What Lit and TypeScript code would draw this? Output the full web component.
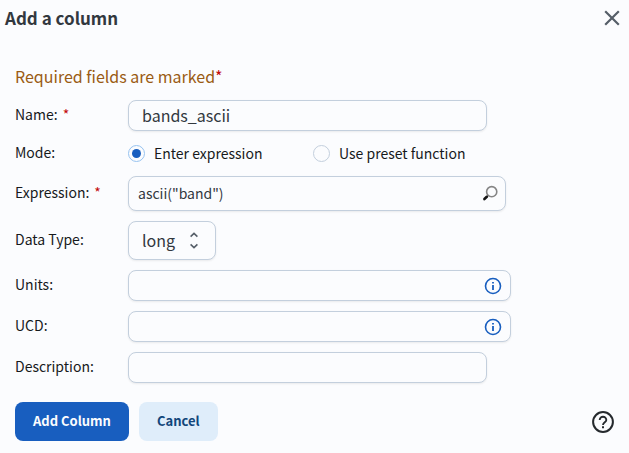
import { LitElement, html, css } from "lit";
import { customElement, property, state } from "lit/decorators.js";

const infoIcon = html`<svg viewBox="0 0 18 18" width="18" height="18" aria-hidden="true">
  <circle cx="9" cy="9" r="7.5" fill="none" stroke="currentColor" stroke-width="1.6" />
  <path d="M8.1 4.9h1.8v1.7H8.1zM8.1 8h1.8v5H8.1z" fill="currentColor" />
</svg>`;

@customElement("form-row")
class FormRow extends LitElement {
  @property() label = "";
  @property({ type: Boolean }) required = false;

  static styles = css`
    :host {
      display: grid;
      grid-template-columns: 103px minmax(0, 1fr);
      column-gap: 10px;
      align-items: center;
    }
    .label {
      display: flex;
      gap: 5px;
      line-height: 20px;
      padding-bottom: 4px;
      white-space: nowrap;
    }
    .star {
      color: #c20a0a;
    }
  `;

  render() {
    return html`
      <span class="label" aria-hidden="true">
        <span>${this.label}:</span>${this.required ? html`<span class="star">*</span>` : null}
      </span>
      <slot></slot>
    `;
  }
}

@customElement("app-root")
class AppRoot extends LitElement {
  @state() private mode = "expression";

  static styles = css`
    :host {
      display: block;
      box-sizing: border-box;
      min-height: 100vh;
      background: #fbfcfe;
      color: #171a1c;
      font-family: "Noto Sans CJK SC", "Noto Sans", sans-serif;
      font-size: 14px;
      font-weight: 400;
    }
    * {
      box-sizing: border-box;
    }
    button,
    input,
    select {
      font: inherit;
      margin: 0;
    }
    button {
      border: 0;
      padding: 0;
      background: none;
      cursor: pointer;
    }
    svg {
      display: block;
    }
    .header {
      display: flex;
      align-items: center;
      justify-content: space-between;
      height: 36px;
      padding: 0 8px 0 5px;
    }
    .title {
      margin: 0;
      font-size: 17px;
      line-height: 24px;
      font-weight: 700;
      color: #32383e;
    }
    .close {
      color: #555e68;
    }
    .form {
      padding: 27px 15px 12px;
    }
    .notice {
      margin: 0 0 11px;
      font-size: 16px;
      line-height: 26px;
      color: #9a5b13;
    }
    .star {
      color: #c20a0a;
    }
    .rows {
      display: grid;
      gap: 10px;
    }
    .field {
      display: flex;
      align-items: center;
      width: 100%;
      max-width: 359px;
      height: 31px;
      padding: 0 13px;
      border: 1px solid #c3cfdd;
      border-radius: 8px;
      background: #fbfcfe;
      box-shadow: 0 1px 2px rgba(21, 21, 21, 0.08);
      color: #32383e;
      font-size: 16px;
    }
    .field.search {
      max-width: 378px;
      height: 35px;
      padding: 0 6px 0 9px;
      font-size: 14px;
    }
    .field.info {
      max-width: 383px;
      padding: 0 8px 0 13px;
    }
    .field input {
      flex: 1;
      min-width: 0;
      padding: 0 0 2px;
      border: 0;
      outline: 0;
      background: transparent;
      color: inherit;
      line-height: 24px;
    }
    .info-button {
      color: #185ebf;
    }
    .modes {
      display: grid;
      grid-template-columns: 185px max-content;
      height: 25px;
      align-items: center;
    }
    .mode {
      display: flex;
      align-items: center;
      gap: 9px;
      line-height: 20px;
    }
    .mode span {
      padding-bottom: 2px;
    }
    .mode input {
      appearance: none;
      display: grid;
      place-items: center;
      width: 17px;
      height: 17px;
      border: 1px solid #c3cfdd;
      border-radius: 50%;
    }
    .mode input:checked {
      border-color: #97c3f0;
    }
    .mode input:checked::before {
      content: "";
      width: 9px;
      height: 9px;
      border-radius: 50%;
      background: #185ebf;
    }
    .picker {
      display: grid;
      grid-template-columns: 88px;
      align-items: center;
    }
    .picker select,
    .picker svg {
      grid-area: 1 / 1;
    }
    .picker select {
      appearance: none;
      height: 39px;
      padding: 0 30px 2px 13px;
      border: 1px solid #c3cfdd;
      border-radius: 8px;
      background: #fbfcfe;
      box-shadow: 0 1px 2px rgba(21, 21, 21, 0.08);
      color: #32383e;
      font-size: 16px;
    }
    .picker svg {
      justify-self: end;
      margin-right: 12px;
      color: #555e68;
      pointer-events: none;
    }
    .footer {
      display: flex;
      align-items: center;
      gap: 10px;
      margin-top: 19px;
    }
    .action {
      height: 39px;
      padding: 0 18px 2px;
      border-radius: 8px;
      font-size: 13px;
      line-height: 20px;
      font-weight: 700;
    }
    .primary {
      background: #185ebf;
      color: #fbfcfe;
    }
    .secondary {
      background: #dfedfa;
      color: #12467b;
    }
    .help {
      margin-left: auto;
      color: #25292d;
    }
  `;

  private setMode(mode: string) {
    this.mode = mode;
  }

  render() {
    return html`
      <header class="header">
        <h1 class="title">Add a column</h1>
        <button class="close" aria-label="Close">
          <svg viewBox="0 0 18 18" width="18" height="18" aria-hidden="true">
            <path d="M2.2 2.2l13.6 13.6M15.8 2.2L2.2 15.8" fill="none" stroke="currentColor" stroke-width="2.2" />
          </svg>
        </button>
      </header>
      <form class="form" @submit=${(e: Event) => e.preventDefault()}>
        <p class="notice">Required fields are marked<span class="star">*</span></p>
        <div class="rows">
          <form-row label="Name" required>
            <div class="field"><input aria-label="Name" required .value=${"bands_ascii"} /></div>
          </form-row>
          <form-row label="Mode">
            <div class="modes" role="radiogroup" aria-label="Mode">
              <label class="mode">
                <input type="radio" name="mode" .checked=${this.mode === "expression"}
                  @change=${() => this.setMode("expression")} />
                <span>Enter expression</span>
              </label>
              <label class="mode">
                <input type="radio" name="mode" .checked=${this.mode === "preset"}
                  @change=${() => this.setMode("preset")} />
                <span>Use preset function</span>
              </label>
            </div>
          </form-row>
          <form-row label="Expression" required>
            <div class="field search">
              <input aria-label="Expression" required .value=${'ascii("band")'} />
              <button type="button" aria-label="Search">
                <svg viewBox="0 0 18 18" width="18" height="18" aria-hidden="true">
                  <circle cx="10.7" cy="6.7" r="5.1" fill="none" stroke="#858585" stroke-width="1.6" />
                  <path d="M7.2 10.4L5.6 12" stroke="#777" stroke-width="1.6" />
                  <path d="M5.8 11.8L3.4 14" stroke="#151515" stroke-width="2.6" stroke-linecap="round" />
                </svg>
              </button>
            </div>
          </form-row>
          <form-row label="Data Type">
            <div class="picker">
              <select aria-label="Data Type">
                <option>long</option>
                <option>int</option>
                <option>double</option>
                <option>char</option>
              </select>
              <svg viewBox="0 0 20 20" width="20" height="20" aria-hidden="true">
                <path d="M6.6 5.6L10 2.4l3.4 3.2M6.6 13.4l3.4 3.2 3.4-3.2" fill="none" stroke="currentColor"
                  stroke-width="1.6" />
              </svg>
            </div>
          </form-row>
          <form-row label="Units">
            <div class="field info">
              <input aria-label="Units" />
              <button type="button" class="info-button" aria-label="About units">${infoIcon}</button>
            </div>
          </form-row>
          <form-row label="UCD">
            <div class="field info">
              <input aria-label="UCD" />
              <button type="button" class="info-button" aria-label="About UCD">${infoIcon}</button>
            </div>
          </form-row>
          <form-row label="Description">
            <div class="field"><input aria-label="Description" /></div>
          </form-row>
        </div>
        <div class="footer">
          <button class="action primary">Add Column</button>
          <button type="button" class="action secondary">Cancel</button>
          <button type="button" class="help" aria-label="Help">
            <svg viewBox="0 0 22 22" width="22" height="22" aria-hidden="true">
              <circle cx="11" cy="11" r="9.9" fill="none" stroke="currentColor" stroke-width="2" />
              <path d="M7.7 9a3.3 3.3 0 1 1 6.6 0c0 2.1-3.3 2.4-3.3 4.9" fill="none" stroke="currentColor"
                stroke-width="1.9" />
              <path d="M10 15.3h2v2h-2z" fill="currentColor" />
            </svg>
          </button>
        </div>
      </form>
    `;
  }
}
